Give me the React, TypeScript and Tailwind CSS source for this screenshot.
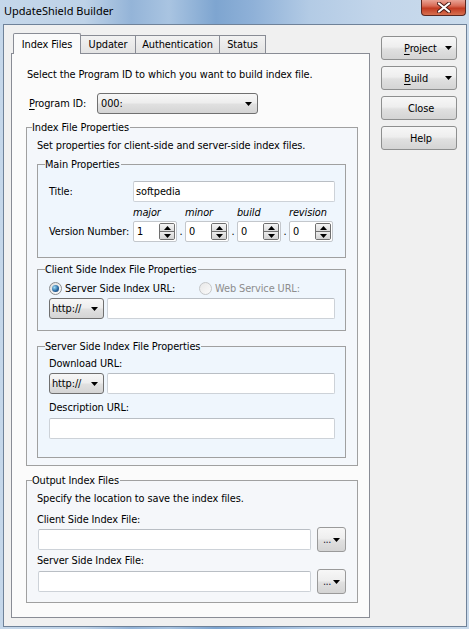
import React from "react";

const Down = () => (
  <svg width="7" height="4" viewBox="0 0 7 4" className="block">
    <path d="M0 0h7L3.5 4z" fill="#000" />
  </svg>
);
const Up = () => (
  <svg width="7" height="4" viewBox="0 0 7 4" className="block">
    <path d="M0 4h7L3.5 0z" fill="#000" />
  </svg>
);

const btnBg =
  "bg-[linear-gradient(#f7f7f7_0%,#eeeeee_45%,#e0e0e0_55%,#d4d4d4_100%)]";

function Combo({ w, text, pl }: { w: string; text: string; pl: string }) {
  return (
    <div
      className={`flex h-[21px] ${w} items-center rounded-[3px] border border-[#707070] ${btnBg} ${pl} pr-[5px]`}
    >
      <span className="flex-1">{text}</span>
      <Down />
    </div>
  );
}

function TextBox({ w, value = "", extra = "" }: { w: string; value?: string; extra?: string }) {
  return (
    <div
      className={`flex h-[21px] ${w} items-center rounded-[2px] border border-[#cdd2d8] border-t-[#b9bec4] bg-white pl-[2px] ${extra}`}
    >
      {value}
    </div>
  );
}

function Spin({ v }: { v: string }) {
  return (
    <div className="flex h-[21px] w-[44px] items-center rounded-[2px] border border-[#c3c7cc] bg-white pl-[3px] pr-[1px]">
      <span className="flex-1">{v}</span>
      <div className="flex h-[17px] w-[16px] flex-col overflow-hidden rounded-[2px] border border-[#6f6f6f]">
        <div className="flex flex-1 items-center justify-center border-b border-[#6f6f6f] bg-[linear-gradient(#f5f5f5,#dddddd)]">
          <Up />
        </div>
        <div className="flex flex-1 items-center justify-center bg-[linear-gradient(#ececec,#d2d2d2)]">
          <Down />
        </div>
      </div>
    </div>
  );
}

function Dot() {
  return <span className="flex w-[8px] justify-center">.</span>;
}

function SideButton({ children, arrow }: { children: React.ReactNode; arrow?: boolean }) {
  return (
    <div
      className={`flex h-[24px] w-[76px] items-center rounded-[3px] border border-[#8e8f8f] ${btnBg} ${
        arrow ? "pl-[22px] pr-[4px]" : "justify-center pl-[4px]"
      }`}
    >
      <span className={arrow ? "flex-1" : ""}>{children}</span>
      {arrow && <Down />}
    </div>
  );
}

function BrowseButton() {
  return (
    <div
      className={`ml-[6px] flex h-[25px] w-[29px] items-center rounded-[3px] border border-[#9a9a9a] ${btnBg} pl-[5px] pr-[5px]`}
    >
      <span className="flex-1 text-[#223] tracking-[-0.5px]">...</span>
      <Down />
    </div>
  );
}

export default function App() {
  return (
    <div className="h-[629px] w-[469px] overflow-hidden bg-[linear-gradient(90deg,#c5d7ea_0%,#bed2e7_18%,#94b4d8_28%,#a9c4e1_36%,#7ea5d0_46%,#8fb1d8_54%,#b3cbe5_66%,#c2d5ea_80%,#cadbec_100%)] font-['DejaVu_Sans',sans-serif] text-[9.8px] leading-[13px] tracking-[-0.1px] text-black">
      {/* title bar */}
      <div className="flex h-[24px] items-start">
        <span className="pl-[4px] pt-[4px] font-['Noto_Sans',sans-serif] text-[11px] leading-[13px] tracking-normal text-black">
          UpdateShield Builder
        </span>
        <div className="ml-auto mr-[3px] flex h-[16px] w-[45px] items-center justify-center rounded-b-[4px] border border-t-0 border-[#5a2720] bg-[linear-gradient(#e9a395_0%,#d86a55_40%,#c23b22_55%,#d7704f_100%)]">
          <svg width="14" height="11" viewBox="0 0 14 11">
            <path d="M2 1.5l10 8M12 1.5l-10 8" stroke="#4a1a14" strokeWidth="4" strokeLinecap="round" />
            <path d="M2 1.5l10 8M12 1.5l-10 8" stroke="#ffffff" strokeWidth="2.2" strokeLinecap="round" />
          </svg>
        </div>
      </div>

      {/* client area */}
      <div className="ml-[3px] flex h-[603px] w-[464px] border border-[#6f8299] bg-[#f0f0f0]">
        <div className="pl-[7px] pt-[8px]">
          {/* tabs */}
          <div className="relative z-10 flex h-[20px] items-end pl-[2px]">
            <div className="relative z-10 -mb-px flex h-[21px] w-[68px] items-center justify-center rounded-t-[2px] border border-b-0 border-[#898c95] bg-[#fbfbfb]">
              Index Files
            </div>
            <div className="-ml-px flex h-[18px] w-[56px] items-center justify-center border border-b-0 border-[#898c95] bg-[linear-gradient(#f2f2f2,#e3e3e3)]">
              Updater
            </div>
            <div className="-ml-px flex h-[18px] w-[85px] items-center justify-center border border-b-0 border-[#898c95] bg-[linear-gradient(#f2f2f2,#e3e3e3)]">
              Authentication
            </div>
            <div className="-ml-px flex h-[18px] w-[47px] items-center justify-center border border-b-0 border-[#898c95] bg-[linear-gradient(#f2f2f2,#e3e3e3)]">
              Status
            </div>
          </div>

          {/* pane */}
          <div className="h-[565px] w-[359px] border border-[#898c95] bg-[#fbfbfb]">
            <p className="mt-[14px] pl-[15px]">Select the Program ID to which you want to build index file.</p>
            <div className="mt-[12px] flex items-center pl-[17px]">
              <span className="w-[68px]">
                <u className="underline-offset-[2px]">P</u>rogram ID:
              </span>
              <Combo w="w-[161px]" text="000:" pl="pl-[3px]" />
            </div>

            <fieldset className="ml-[14px] mt-[7px] w-[332px] border border-[#a0a0a0] bg-[#f4f7fb] pb-[7px]">
              <legend className="ml-[5px] pr-[1px]">Index File Properties</legend>
              <p className="mt-[5px] pl-[10px]">Set properties for client-side and server-side index files.</p>

              <fieldset className="ml-[10px] mt-[6px] w-[309px] border border-[#a0a0a0] bg-[#eff6fd] pb-[15px]">
                <legend className="ml-[7px] pr-[1px]">Main Properties</legend>
                <div className="mt-[10px] flex items-center pl-[11px]">
                  <span className="w-[84px]">Title:</span>
                  <TextBox w="w-[202px]" value="softpedia" />
                </div>
                <div className="ml-[95px] mt-[4px] flex h-[13px] italic">
                  <span className="w-[52px]">major</span>
                  <span className="w-[52px]">minor</span>
                  <span className="w-[52px]">build</span>
                  <span className="w-[52px]">revision</span>
                </div>
                <div className="mt-[2px] flex items-center pl-[11px]">
                  <span className="w-[84px]">Version Number:</span>
                  <Spin v="1" />
                  <Dot />
                  <Spin v="0" />
                  <Dot />
                  <Spin v="0" />
                  <Dot />
                  <Spin v="0" />
                </div>
              </fieldset>

              <fieldset className="ml-[10px] mt-[5px] w-[309px] border border-[#a0a0a0] bg-[#eff6fd] pb-[11px]">
                <legend className="ml-[7px] pr-[1px]">Client Side Index File Properties</legend>
                <div className="mt-[6px] flex h-[13px] items-center pl-[11px]">
                  <span className="flex h-[13px] w-[13px] items-center justify-center rounded-full border border-[#8a8c8e] bg-[linear-gradient(135deg,#dcdcdc,#ffffff)]">
                    <span className="h-[7px] w-[7px] rounded-full bg-[radial-gradient(circle_at_35%_35%,#9fdcf7,#2a6aa3_55%,#0f2f5c)]" />
                  </span>
                  <span className="ml-[3px] w-[134px]">Server Side Index URL:</span>
                  <span className="h-[13px] w-[13px] rounded-full border border-[#c4c6c8] bg-[linear-gradient(135deg,#e8e8e8,#fafafa)]" />
                  <span className="ml-[3px] text-[#8d8d8d]">Web Service URL:</span>
                </div>
                <div className="mt-[3px] flex items-center gap-[3px] pl-[11px]">
                  <Combo w="w-[55px]" text="http://" pl="pl-[2px]" />
                  <TextBox w="w-[228px]" />
                </div>
              </fieldset>

              <fieldset className="ml-[10px] mt-[9px] w-[309px] border border-[#a0a0a0] bg-[#eff6fd] pb-[18px]">
                <legend className="ml-[7px] pr-[1px]">Server Side Index File Properties</legend>
                <p className="mt-[4px] pl-[11px]">Download URL:</p>
                <div className="mt-[3px] flex items-center gap-[3px] pl-[11px]">
                  <Combo w="w-[55px]" text="http://" pl="pl-[2px]" />
                  <TextBox w="w-[228px]" />
                </div>
                <p className="mt-[7px] pl-[11px]">Description URL:</p>
                <TextBox w="w-[286px]" extra="ml-[11px] mt-[4px]" />
              </fieldset>
            </fieldset>

            <fieldset className="ml-[14px] mt-[8px] w-[332px] border border-[#a0a0a0] bg-[#f5f7fa] pb-[8px]">
              <legend className="ml-[5px] pr-[1px]">Output Index Files</legend>
              <p className="mt-[5px] pl-[10px]">Specify the location to save the index files.</p>
              <p className="mt-[8px] pl-[10px]">Client Side Index File:</p>
              <div className="mt-[1px] flex h-[25px] items-center pl-[11px]">
                <TextBox w="w-[273px]" />
                <BrowseButton />
              </div>
              <p className="mt-[2px] pl-[10px]">Server Side Index File:</p>
              <div className="mt-[2px] flex h-[25px] items-center pl-[11px]">
                <TextBox w="w-[273px]" />
                <BrowseButton />
              </div>
            </fieldset>
          </div>
        </div>

        {/* right buttons */}
        <div className="ml-[11px] mt-[11px] flex flex-col gap-[6px]">
          <SideButton arrow>
            <u className="underline-offset-[2px]">P</u>roject
          </SideButton>
          <SideButton arrow>
            <u className="underline-offset-[2px]">B</u>uild
          </SideButton>
          <SideButton>Close</SideButton>
          <SideButton>Help</SideButton>
        </div>
      </div>
    </div>
  );
}
